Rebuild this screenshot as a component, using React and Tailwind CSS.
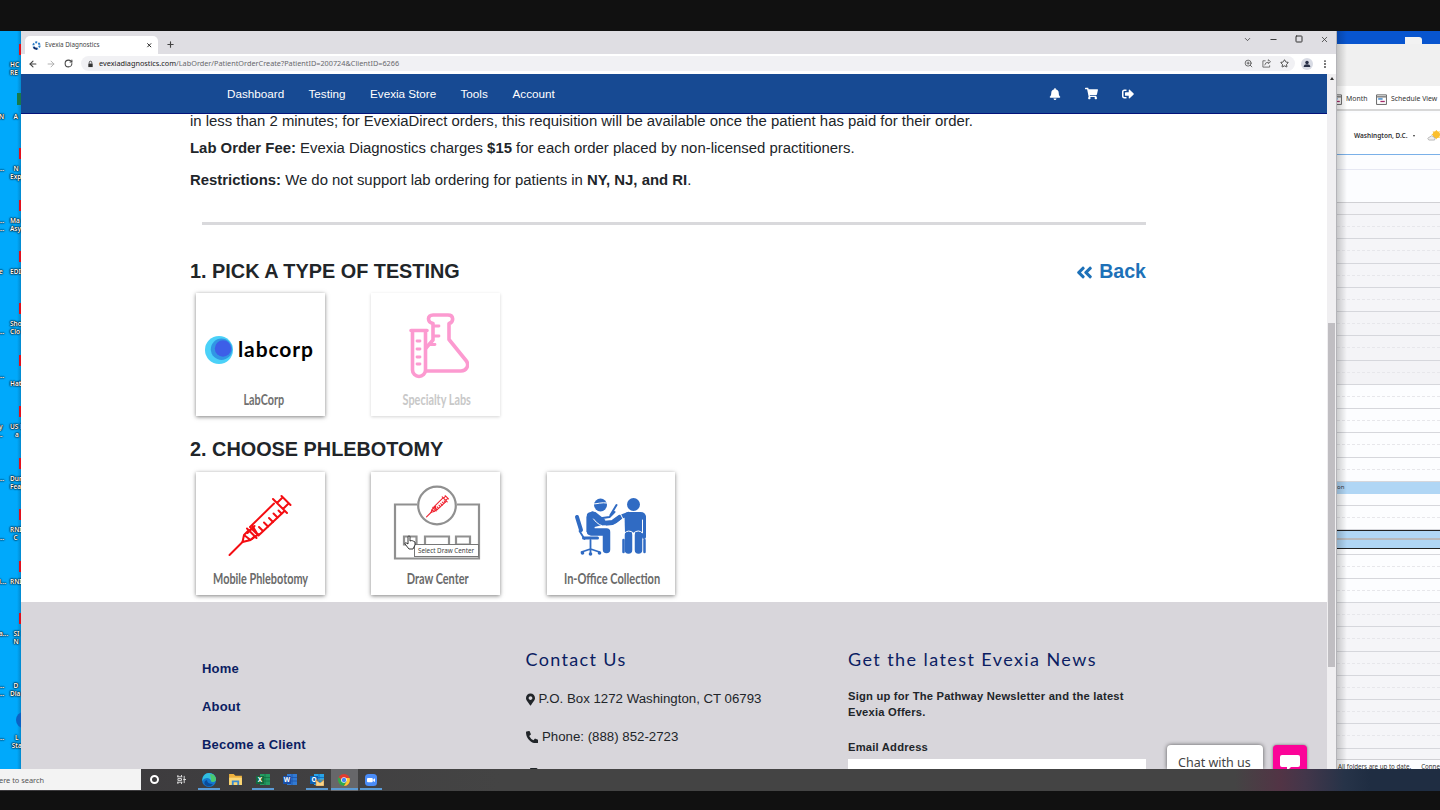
import React from "react";
import {
  FaAngleDoubleLeft,
  FaBell,
  FaFax,
  FaMapMarkerAlt,
  FaPhoneAlt,
  FaShoppingCart,
  FaSignOutAlt,
} from "react-icons/fa";
import {
  ArrowLeft,
  ArrowRight,
  ChevronDown,
  Minus,
  MoreVertical,
  Plus,
  RotateCw,
  Square,
  Star,
  X,
  ZoomIn,
} from "lucide-react";

const desktopLabels = [
  { top: "top-[30px]", left: "", right: "HC\nRE" },
  { top: "top-[82px]", left: "N", right: "  A" },
  { top: "top-[134px]", left: "...", right: "  N\nExp" },
  { top: "top-[186px]", left: "...\n...", right: "Ma\nAsy" },
  { top: "top-[237px]", left: "e", right: "EDI" },
  { top: "top-[289px]", left: "\n...", right: "Sho\nClo" },
  { top: "top-[341px]", left: "...", right: "\nHat" },
  { top: "top-[392px]", left: "y\n..", right: "US E\n   a" },
  { top: "top-[444px]", left: "...", right: "Dun\nFea" },
  { top: "top-[495px]", left: "\n...", right: "RNI\n  C" },
  { top: "top-[547px]", left: "l...", right: "RNI" },
  { top: "top-[599px]", left: "a...", right: "  SI\n  N" },
  { top: "top-[651px]", left: "...\n...", right: "  D\nDia" },
  { top: "top-[703px]", left: "...", right: "   L\n Sta" },
];

const calendarRows = [
  "bg-[#f5f5f8]", "bg-[#f5f5f8]", "bg-[#f5f5f8]", "bg-[#f5f5f8]", "bg-[#f4f4f7]",
  "bg-[#f4f4f7]", "bg-[#f3f3f6]", "bg-[#fcfdff]", "bg-[#fcfdff]", "bg-[#fcfdff]",
  "bg-[#fcfdff]", "bg-[#fcfdff]", "bg-[#fcfdff]", "bg-[#fcfdff]", "bg-[#fcfdff]",
  "bg-[#fcfdff]", "bg-[#f5f5f8]", "bg-[#f5f5f8]", "bg-[#f5f5f8]", "bg-[#f5f5f8]",
  "bg-[#f5f5f8]", "bg-[#f5f5f8]",
];

function Desktop() {
  return (
    <div className="relative w-[21px] shrink-0 overflow-hidden bg-[#00a9fb] font-['Noto_Sans'] text-[6.5px] leading-[8px] font-semibold text-white">
      <div className="absolute top-0 right-0 h-full w-1 bg-linear-to-r from-transparent to-[#0568a080]" />
      {desktopLabels.map((item, i) => (
        <div key={i} className={`absolute left-0 w-[30px] ${item.top}`}>
          <span className="absolute left-[-1px] whitespace-pre [text-shadow:0_0_2px_#000,0_0_1px_#000,0_0_2px_#000]">
            {item.left}
          </span>
          <span className="absolute left-[10px] whitespace-pre [text-shadow:0_0_2px_#000,0_0_1px_#000,0_0_2px_#000]">
            {item.right}
          </span>
          {i === 13 ? (
            <span className="absolute top-[-22px] left-[16px] size-4 rounded-full bg-[#0b62c4]" />
          ) : i === 1 ? (
            <span className="absolute top-[-20px] left-[17px] h-3 w-2 bg-[#17794a]" />
          ) : i === 12 ? null : (
            <span className="absolute top-[-17px] left-[19px] h-[11px] w-2 bg-[#e0101c]" />
          )}
        </div>
      ))}
    </div>
  );
}

function Favicon() {
  return (
    <svg viewBox="0 0 20 20" className="size-[9px]">
      <circle cx="10" cy="10" r="7" fill="none" stroke="#2b7cc7" strokeWidth="4.5" strokeDasharray="4.5 2.8" />
      <path d="M4 14a7 7 0 0 0 7 3" fill="none" stroke="#122a66" strokeWidth="4.5" />
    </svg>
  );
}

function BrowserChrome() {
  return (
    <div className="font-['Noto_Sans'] text-[#444]">
      <div className="flex h-[23px] bg-[#dfdee3] pl-1">
        <div className="mt-[5px] flex h-[18px] w-[133px] items-center rounded-t-[5px] bg-white pr-[6px] pl-[7px]">
          <Favicon />
          <span className="ml-[4px] text-[6.3px] whitespace-nowrap">Evexia Diagnostics</span>
          <X className="ml-auto size-[6.5px] text-[#222]" strokeWidth={3.6} />
        </div>
        <Plus className="mt-[9px] ml-[8px] size-[9px]" strokeWidth={3} />
        <div className="mt-[4px] mr-[7.5px] ml-auto flex items-start gap-[17px] text-[#333]">
          <ChevronDown className="size-[9px]" />
          <Minus className="size-[9px]" strokeWidth={2.5} />
          <Square className="size-[8px]" strokeWidth={3} />
          <X className="size-[9px]" />
        </div>
      </div>
      <div className="flex h-5 items-center bg-white pb-px pl-[7px]">
        <ArrowLeft className="size-[10px]" strokeWidth={2.6} />
        <ArrowRight className="ml-[8px] size-[10px] text-[#aaa]" strokeWidth={2.2} />
        <RotateCw className="ml-[8px] size-[9px]" strokeWidth={2.8} />
        <div className="ml-[8px] flex h-[15px] w-[1214px] items-center rounded-full bg-[#f1f1f4] pr-[6px] pl-[6px]">
          <svg viewBox="0 0 8 9" className="h-[8px] w-[7px] shrink-0">
            <path d="M1.500 4h5v4h-5z" fill="#333" />
            <path d="M2.600 4V2.500q0-1.200 1.400-1.200t1.400 1.200V4" fill="none" stroke="#333" strokeWidth=".9" />
          </svg>
          <span className="ml-[5px] text-[7.3px] whitespace-nowrap text-[#68686c]">
            <span className="text-[#222]">evexiadiagnostics.com</span>
            /LabOrder/PatientOrderCreate?PatientID=200724&amp;ClientID=6266
          </span>
          <div className="ml-auto flex gap-[9px]">
            <ZoomIn className="size-[9px]" />
            <svg viewBox="0 0 10 10" className="size-[9px] fill-none stroke-[#555] stroke-[0.900]">
              <path d="M4 2H1v7h7.500V7M3 7q.5-3.500 4-3.500V5.200L9.500 3 7 .8v1.500" />
            </svg>
            <Star className="size-[9px]" strokeWidth={2.6} />
          </div>
        </div>
        <div className="ml-[6px] flex size-[12px] items-center justify-center rounded-full bg-[#d8dbe4]">
          <svg viewBox="0 0 12 12" className="size-[8px] fill-[#283046]">
            <circle cx="6" cy="3.6" r="2.6" />
            <path d="M1 10.5c0-3 2-4 5-4s5 1 5 4z" />
          </svg>
        </div>
        <MoreVertical className="ml-[7px] size-[10px]" strokeWidth={2.6} />
      </div>
    </div>
  );
}

function NavBar() {
  return (
    <nav className="flex h-10 items-center border-b border-[#04137a] bg-[#174a93] pl-[206px] text-[11.7px] text-white">
      <a className="w-[81.5px] pt-px">Dashboard</a>
      <a className="w-[61.5px] pt-px">Testing</a>
      <a className="w-[90.5px] pt-px">Evexia Store</a>
      <a className="w-[52px] pt-px">Tools</a>
      <a className="pt-px">Account</a>
      <div className="mr-[193px] ml-auto flex items-center gap-[24px]">
        <FaBell className="size-[12px]" />
        <FaShoppingCart className="size-[13px]" />
        <FaSignOutAlt className="size-[12px]" />
      </div>
    </nav>
  );
}

function Card({ label, labelClass, faded, children }) {
  return (
    <div
      className={`flex h-[123px] w-[128.500px] shrink-0 flex-col items-center bg-white ${
        faded
          ? "shadow-[0_1px_3px_#0000002b]"
          : "shadow-[0_1px_4px_#00000080]"
      }`}
    >
      <div className="flex h-[95px] w-full justify-center">{children}</div>
      <span
        className={`flex h-[22px] items-center font-['Lato'] text-[15px] font-bold whitespace-nowrap ${labelClass}`}
      >
        {label}
      </span>
    </div>
  );
}

function LabcorpLogo() {
  return (
    <div className="flex h-[114px] w-full items-center pl-[9px]">
      <svg viewBox="0 0 28 28" className="size-[28px] shrink-0">
        <circle cx="14" cy="14" r="14" fill="#4bd1f8" />
        <circle cx="16.5" cy="13.3" r="10.7" fill="#3196e4" />
        <circle cx="18" cy="12.5" r="8.2" fill="#3d5ee8" />
      </svg>
      <span className="mb-[2px] ml-[5px] font-['Lato'] text-[21px] font-bold tracking-[0.9px] text-black">
        labcorp
      </span>
    </div>
  );
}

function Flasks() {
  return (
    <svg
      viewBox="0 0 60 66"
      className="mt-[20px] ml-[6px] h-[66px] w-[60px] fill-none stroke-[#fc9ad0] stroke-[3.6]"
      strokeLinecap="round"
      strokeLinejoin="round"
    >
      <path d="M2 17.5H18M3.5 17.5V57a6.5 6.5 0 0 0 13 0V17.5" />
      <path d="M8 28h3M8 36h3M8 44h3M8 51h3" strokeWidth="2.8" />
      <path d="M17 35l7-8V10.5c-6-1.5-6-8.500 0-8.500h15c6 0 6 7 1 8.500v16l17 21c4 5 0 10.500-5 10.500H18" />
      <path d="M25 13h5M25 23h5M20 31.500h6" strokeWidth="2.800" />
    </svg>
  );
}

function Syringe({ className }) {
  return (
    <svg viewBox="0 0 64 64" className={className} fill="none" strokeLinecap="round">
      <path d="M1.500 61L14.500 48" />
      <path d="M14.500 48l1.500-7 5-5M14.500 48l8-2 4.500-4M16 41l6.500 5" />
      <path d="M19 34.500l9.500 9.500M19.500 39l7-7M24 45l7-5" />
      <path d="M22 33L46 9.500M30.500 41.500L56 17.500M22 33l8.500 8.500M24 31l6 10" />
      <path d="M45 5l14 14M49 9l5-5M55 15l5-5M53.500 2l9 9" />
      <path d="M35 37l-4-4M40 32.500l-4-4M45 28l-4-4M49.500 23.500l-4-4M53.500 19.500l-3-3" />
    </svg>
  );
}

function DrawCenterArt() {
  return (
    <div className="relative mt-[13px] ml-[2px] h-[76px] w-[88px]">
      <svg viewBox="0 0 88 76" className="h-[76px] w-[88px] fill-none stroke-[#909090] stroke-[2.200]">
        <path d="M24 19.500H2V73.500H86V19.500H64" />
        <circle cx="44" cy="20.500" r="18.800" />
        <path d="M11 51.500h12.500v8H11zM32 60v-8.500h24v8.500M63 51.500h14v8H63z" />
      </svg>
      <Syringe className="absolute top-[10px] left-[33px] size-[23px] stroke-[#ef2330] stroke-[3]" />
      <svg viewBox="0 0 12 15" className="absolute top-[50px] left-[11px] z-10 h-[15px] w-[12px]">
        <path
          d="M4 8V2c0-1.500 2-1.500 2 0v4c2-1 3 0 5 1v3l-2 4H5L1 9c-.5-1 .5-2 3 0z"
          fill="#fff"
          stroke="#222"
          strokeWidth=".9"
        />
      </svg>
      <div className="absolute top-[59px] left-[21px] flex h-[13px] w-[65px] items-center justify-center border border-[#777] bg-white font-['Noto_Sans'] text-[6.300px] whitespace-nowrap text-[#444]">
        Select Draw Center
      </div>
    </div>
  );
}

function OfficeArt() {
  return (
    <svg viewBox="0 0 72 60" className="mt-[25px] mr-[1px] h-[60px] w-[73px]" strokeLinecap="round" strokeLinejoin="round">
      <g fill="none" stroke="#306bc3">
        <path d="M2.500 20l4 13" strokeWidth="4" />
        <path d="M5 34l5 8M16 43v10M7 55l9-3 9 3M16 51v5" strokeWidth="1.800" />
        <path d="M9 41h14" strokeWidth="3" />
        <path d="M16 19v15.500M17 35H32V52.500" strokeWidth="7.500" />
        <path d="M18 17l10 9.500 10-1 7-5" strokeWidth="5" />
        <path d="M28 21l7-1 5-5M36 18l6-10" strokeWidth="2" />
        <path d="M54 17l-8 3-5 4" strokeWidth="4.500" />
        <path d="M69.500 20v20" strokeWidth="4" />
        <path d="M54 38v15M64 38v15" strokeWidth="7.500" />
        <path d="M49 43v12M70 43v12" strokeWidth="2.500" />
      </g>
      <g fill="#306bc3">
        <path d="M12 20q2-6 9-5l10 8-3 5-8 2v5h-8z" />
        <path d="M50 18q1-3 4-3h12q5 0 5.500 5v16H50.500z" />
        <circle cx="26" cy="8" r="6.500" />
        <circle cx="59" cy="7.500" r="6.500" />
        <circle cx="8" cy="56" r="1.800" />
        <circle cx="16" cy="57" r="1.800" />
        <circle cx="25" cy="56" r="1.800" />
      </g>
      <path d="M18.500 7c4 0 9-2 14-1M46 17l3 6M50 36q4-4 9 0q5-4 9 0V23M59 37v20M19 22q6 8 12 7" fill="none" stroke="#fff" strokeWidth="1" />
    </svg>
  );
}

function OrderPage() {
  return (
    <main className="h-[488px] bg-white pr-[181px] pl-[169px] text-[#212529]">
      <p className="flex h-[14px] items-center text-[14.9px] whitespace-nowrap">
        in less than 2 minutes; for EvexiaDirect orders, this requisition will be available once
        the patient has paid for their order.
      </p>
      <p className="h-10 text-[14.9px] leading-10 whitespace-nowrap">
        <b>Lab Order Fee:</b> Evexia Diagnostics charges <b>$15</b> for each order placed by
        non-licensed practitioners.
      </p>
      <p className="h-6 text-[14.9px] leading-6 whitespace-nowrap">
        <b>Restrictions:</b> We do not support lab ordering for patients in{" "}
        <b>NY, NJ, and RI</b>.
      </p>
      <hr className="mt-[30px] ml-3 h-[3px] border-0 bg-[#d9d9dc]" />
      <div className="mt-[35px] flex h-6 items-center justify-between">
        <h2 className="text-[19.85px] font-bold whitespace-nowrap">1. PICK A TYPE OF TESTING</h2>
        <a className="flex items-center gap-[5px] text-[19.6px] font-bold text-[#1d71b8]">
          <FaAngleDoubleLeft className="size-[19px]" />
          Back
        </a>
      </div>
      <div className="mt-[9px] flex gap-[46.800px] pl-[6px]">
        <Card label="LabCorp" labelClass="scale-x-[0.720] pl-[10px] text-[#707070]">
          <LabcorpLogo />
        </Card>
        <Card label="Specialty Labs" labelClass="scale-x-[0.725] pl-[3px] text-[#c8c8c8]" faded>
          <Flasks />
        </Card>
      </div>
      <h2 className="mt-[22px] flex h-6 items-center text-[19.85px] font-bold whitespace-nowrap">
        2. CHOOSE PHLEBOTOMY
      </h2>
      <div className="mt-[10px] flex gap-[46.800px] pl-[6px]">
        <Card label="Mobile Phlebotomy" labelClass="scale-x-[0.725] text-[#6a6a6a]">
          <Syringe className="mt-[22px] size-[64px] stroke-[#f40d12] stroke-[2]" />
        </Card>
        <Card label="Draw Center" labelClass="scale-x-[0.730] pl-[6px] text-[#6a6a6a]">
          <DrawCenterArt />
        </Card>
        <Card label="In-Office Collection" labelClass="scale-x-[0.735] pl-[3px] text-[#6a6a6a]">
          <OfficeArt />
        </Card>
      </div>
    </main>
  );
}

function Footer() {
  return (
    <footer className="relative flex h-[167px] overflow-hidden bg-[#d8d6db] pl-[181px] text-[#212529]">
      <div className="w-[323.500px] pt-[48px] text-[13px] font-bold tracking-[0.180px] text-[#0b1d62]">
        <p className="h-[38px] leading-[38px]">Home</p>
        <p className="h-[38px] leading-[38px]">About</p>
        <p className="h-[38px] leading-[38px]">Become a Client</p>
      </div>
      <div className="w-[322.500px] pt-[45px] text-[13.250px]">
        <h3 className="h-6 font-['Lato'] text-[18px] leading-6 tracking-[1.350px] text-[#0b1d62]">
          Contact Us
        </h3>
        <p className="mt-[9px] flex h-[38px] items-center gap-[4px] whitespace-nowrap">
          <FaMapMarkerAlt className="h-[13px] w-[9px]" />
          P.O. Box 1272 Washington, CT 06793
        </p>
        <p className="flex h-[38px] items-center gap-[4px] whitespace-nowrap">
          <FaPhoneAlt className="size-[12.500px]" />
          Phone: (888) 852-2723
        </p>
        <p className="pt-[12px] pl-px">
          <FaFax className="size-[12px]" />
        </p>
      </div>
      <div className="w-[298px] pt-[45px] text-[11.200px] font-bold tracking-[0.210px]">
        <h3 className="h-6 font-['Lato'] text-[18px] leading-6 font-normal tracking-[1.420px] whitespace-nowrap text-[#0b1d62]">
          Get the latest Evexia News
        </h3>
        <p className="mt-[17px] leading-4 whitespace-nowrap">
          Sign up for The Pathway Newsletter and the latest
          <br />
          Evexia Offers.
        </p>
        <p className="mt-[19px] leading-4">Email Address</p>
        <div className="mt-[4px] h-5 bg-white" />
      </div>
      <div className="absolute top-[143px] right-[64px] h-6 w-[96px] rounded-t-[4px] bg-white pl-[11px] font-['Noto_Sans'] text-[12.500px] leading-[35px] text-[#444] shadow-[0_0_4px_#00000099]">
        Chat with us
      </div>
      <div className="absolute top-[143px] right-[20px] flex h-9 w-[34px] justify-center rounded-[4px] bg-[#fb0498] pt-[10px] shadow-[0_0_3px_#00000080]">
        <svg viewBox="0 0 20 17" className="h-[17px] w-5 fill-white">
          <path d="M2 0h16q2 0 2 2v8q0 2-2 2H11l-4 4v-4H2q-2 0-2-2V2q0-2 2-2z" />
        </svg>
      </div>
    </footer>
  );
}

function ScrollBar() {
  return (
    <div className="flex w-[9px] shrink-0 flex-col items-center bg-[#f0eff1]">
      <span className="mt-[3px] border-x-[2px] border-b-[3px] border-x-transparent border-b-[#333]" />
      <div className="mt-[243px] h-[344px] w-[7px] bg-[#c0bec2]" />
    </div>
  );
}

function CalendarIcon() {
  return (
    <svg viewBox="0 0 10 10" className="size-[11px] shrink-0">
      <path d="M.5 .8h9v8.700h-9z" fill="#fff" stroke="#555" strokeWidth=".8" />
      <path d="M1 2.600h8" stroke="#555" />
      <path d="M2 4.500h4" stroke="#2579c7" strokeWidth="1.200" />
      <path d="M4 6.800h4" stroke="#a32b68" strokeWidth="1.200" />
    </svg>
  );
}

function CalendarWindow() {
  return (
    <div className="relative flex min-w-0 flex-1 flex-col overflow-hidden border-l border-[#b4b4b8] bg-[#fcfdff] font-['Noto_Sans'] text-[6.900px] text-[#333]">
      <div className="flex h-[13px] shrink-0 items-end bg-[#0855cf] pl-[68px]">
        <span className="h-[7px] w-[17px] rounded-tr-[3px] bg-[#f2f2f2]" />
      </div>
      <div className="h-[42px] shrink-0 bg-[#f0f0f0]" />
      <div className="flex h-[25px] shrink-0 items-center border-b-2 border-[#d8d8d8] bg-white pt-[3px] whitespace-nowrap">
        <span className="-ml-[6px] flex">
          <CalendarIcon />
        </span>
        <span className="ml-[4px] w-[30px]">Month</span>
        <CalendarIcon />
        <span className="ml-[4px]">Schedule View</span>
      </div>
      <div className="mt-[2px] flex h-[42px] shrink-0 items-center border-b border-[#7ab0e8] bg-white pt-[4px] pl-[17px] text-[6.500px] font-semibold whitespace-nowrap">
        Washington, D.C.
        <span className="ml-[6px] border-x-[1.500px] border-t-2 border-x-transparent border-t-[#333]" />
        <svg viewBox="0 0 16 12" className="ml-[12px] h-[11px] w-[15px] shrink-0">
          <circle cx="10" cy="5" r="4" fill="#fbbf2e" />
          <path d="M10 0v10M5 5h10M6.500 1.500l7 7M13.500 1.500l-7 7" stroke="#fbbf2e" />
          <path d="M2 11q-3-2 1-3.500q2-2.500 4 0q3 1 1 3.500z" fill="#eee" stroke="#999" strokeWidth=".7" />
        </svg>
      </div>
      <div className="h-[15px] shrink-0 border-b border-[#e6e8f3]" />
      <div className="h-[33px] shrink-0 border-b border-[#d0d0d4]" />
      <div className="h-[12px] shrink-0 border-b border-[#d6d6da] bg-[#f5f5f8]" />
      {calendarRows.map((bg, i) => (
        <div key={i} className={`h-[24.250px] shrink-0 border-b border-[#d6d7dc] ${bg}`}>
          <div className="h-[12px] border-b border-dashed border-[#e7e7eb]" />
        </div>
      ))}
      <div className="h-[11px] shrink-0 border-b border-[#d0d0d4] bg-[#f5f5f8]" />
      <div className="-mt-px shrink-0 pl-px text-[6.200px] leading-[15px] whitespace-nowrap">
        All folders are up to date.<span className="ml-[10px]">Connected</span>
      </div>
      <div className="absolute top-[451px] left-0 h-[11.500px] w-full bg-[#b0d6f5] text-[6px] leading-[10px]">
        on
      </div>
      <div className="absolute top-[499px] left-0 h-[19px] w-full border-y-[1.500px] border-[#222] bg-[#b0d6f5] pt-[7px]">
        <div className="h-[2px] bg-[#b7b9bd]" />
      </div>
      <div className="absolute top-0 left-0 h-full w-[10px] bg-linear-to-r from-[#00000030] to-transparent" />
    </div>
  );
}

function EdgeIcon() {
  return (
    <svg viewBox="0 0 14 14" className="size-[14px]">
      <circle cx="7" cy="7" r="7" fill="#1478cf" />
      <path d="M1 4Q3 0 7 0q6 0 7 6q0 3-4 3-2-4-5-4Q2 5 0 8z" fill="#31bfe0" />
      <path d="M8 1q5 0 6 5 0 3-4 3-2-1-1-3z" fill="#4bc96e" />
      <path d="M5 7q0 4 6 4-3 4-8 1-2-4 2-5z" fill="#0b4b98" />
    </svg>
  );
}

function FolderIcon() {
  return (
    <svg viewBox="0 0 14 12" className="h-[11px] w-[13px]">
      <path d="M0 0h5l2 2h7v10H0z" fill="#eeb23e" />
      <path d="M0 4h14v8H0z" fill="#fbd775" />
      <path d="M3 12V7h8v5H9V9H5v3z" fill="#3a8ad0" />
    </svg>
  );
}

function OfficeAppIcon({ letter, main, dark, mail }) {
  return (
    <svg viewBox="0 0 14 13" className="h-[13px] w-[14px]">
      <path d="M4 1h10v11H4z" fill={main} />
      <path d="M4 4.500h10M4 8h10M9 1v11" stroke={dark} strokeWidth=".7" />
      <path d="M0 3h8v8H0z" fill={dark} />
      <text x="4" y="9.300" textAnchor="middle" fontSize="6.500" fontWeight="700" fill="#fff" fontFamily="Noto Sans">
        {letter}
      </text>
      {mail && <path d="M6 7h8v6H6zl4 3 4-3" fill="#fbd58b" stroke="#d08b31" strokeWidth=".6" />}
    </svg>
  );
}

function ChromeIcon() {
  return (
    <svg viewBox="0 0 12 12" className="size-[12px]">
      <circle cx="6" cy="6" r="6" fill="#e33b2e" />
      <path d="M.8 3A6 6 0 0 0 6 12l3-5H4z" fill="#2da94f" />
      <path d="M6 12a6 6 0 0 0 5.500-8H6l3 3z" fill="#fcc934" />
      <circle cx="6" cy="6" r="2.800" fill="#fff" />
      <circle cx="6" cy="6" r="2.200" fill="#4285f4" />
    </svg>
  );
}

function ZoomIcon() {
  return (
    <svg viewBox="0 0 12 12" className="size-[12px]">
      <rect width="12" height="12" rx="3.500" fill="#4a8cf7" />
      <rect x="2" y="4" width="5.800" height="4.300" rx="1" fill="#fff" />
      <path d="M8.200 5.500L10 4.300v3.700L8.200 6.900z" fill="#fff" />
    </svg>
  );
}

function TaskItem({ open, active, children }) {
  return (
    <div
      className={`flex h-full w-[27.100px] shrink-0 flex-col items-center ${active ? "bg-[#67676a]" : ""}`}
    >
      <div className="flex h-[19px] items-center pt-[2px]">{children}</div>
      <div className={`h-[2px] ${active ? "w-[27px]" : "w-[22px]"} ${open ? "bg-[#5b9bd5]" : ""}`} />
    </div>
  );
}

function TaskBar() {
  return (
    <div className="flex h-[22px] bg-[linear-gradient(90deg,#3b393c_0,#444_500px,#444_1235px,#523445_1280px,#43364a_1305px,#263348_1345px,#1f2d42_1370px)] text-white">
      <div className="h-[21px] w-[141px] overflow-hidden bg-[#f3f3f3] font-['Noto_Sans'] text-[7.400px] leading-[22px] whitespace-nowrap text-[#555]">
        <span className="-ml-px">ere to search</span>
      </div>
      <TaskItem>
        <span className="size-[9px] rounded-full border-2 border-white" />
      </TaskItem>
      <TaskItem>
        <svg viewBox="0 0 10 10" className="size-[9px] fill-none stroke-[#e8e8e8]">
          <path d="M0 2h6M0 8h6M1 4h4v2H1zM8 1v8M7 5h3M1 0v2M5 0v2M1 8v2M5 8v2" />
        </svg>
      </TaskItem>
      <TaskItem open>
        <EdgeIcon />
      </TaskItem>
      <TaskItem>
        <FolderIcon />
      </TaskItem>
      <TaskItem open>
        <OfficeAppIcon letter="X" main="#239b61" dark="#146b3d" />
      </TaskItem>
      <TaskItem>
        <OfficeAppIcon letter="W" main="#327ad2" dark="#1a4fa8" />
      </TaskItem>
      <TaskItem open>
        <OfficeAppIcon letter="O" main="#28a4e8" dark="#0c62b5" mail />
      </TaskItem>
      <TaskItem open active>
        <ChromeIcon />
      </TaskItem>
      <TaskItem open>
        <ZoomIcon />
      </TaskItem>
    </div>
  );
}

export default function App() {
  return (
    <div className="h-[810px] w-[1440px] overflow-hidden bg-[#111] pt-[31px] font-['Liberation_Sans',sans-serif]">
      <div className="flex h-[738px]">
        <Desktop />
        <div className="flex w-[1315px] shrink-0 flex-col">
          <BrowserChrome />
          <div className="flex">
            <div className="w-[1306px]">
              <NavBar />
              <OrderPage />
              <Footer />
            </div>
            <ScrollBar />
          </div>
        </div>
        <CalendarWindow />
      </div>
      <TaskBar />
    </div>
  );
}
